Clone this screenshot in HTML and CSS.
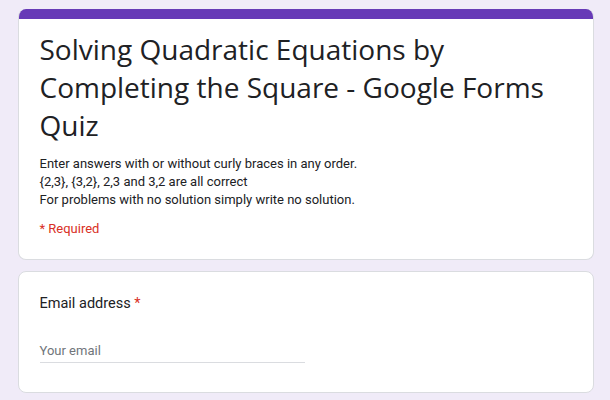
FILE: index.html
```html
<!DOCTYPE html>
<html>
<head>
<meta charset="utf-8">
<link rel="stylesheet" href="styles.css">
</head>
<body>
<div class="page">
  <div class="card header-card">
    <div class="accent"></div>
    <div class="header-body">
      <h1 class="title">Solving Quadratic Equations by Completing the Square - Google Forms Quiz</h1>
      <div class="desc">Enter answers with or without curly braces in any order.<br>{2,3}, {3,2}, 2,3 and 3,2 are all correct<br>For problems with no solution simply write no solution.</div>
      <div class="required">* Required</div>
    </div>
  </div>
  <div class="card question-card">
    <div class="q-label">Email address <span class="star">*</span></div>
    <div class="input">Your email</div>
  </div>
</div>
</body>
</html>
```
FILE: styles.css
```css
html, body {
  margin: 0;
  padding: 0;
  background: #f0ebf8;
}
body {
  font-family: Roboto, "Liberation Sans", sans-serif;
  color: #202124;
}
.page {
  width: 576px;
  margin: 0 auto;
  padding: 9px 0 0 1px;
  display: flex;
  flex-direction: column;
  gap: 11px;
}
.card {
  background: #fff;
  border: 1px solid #dadce0;
  border-radius: 8px;
}
.header-card {
  border-top: none;
  overflow: hidden;
}
.accent {
  height: 10px;
  background: #673ab7;
}
.header-body {
  padding: 11px 21px 21px;
}
.title {
  margin: 0;
  font-family: "Open Sans", sans-serif;
  font-weight: 400;
  font-size: 28px;
  line-height: 38px;
  color: #202124;
}
.desc {
  margin-top: 11px;
  font-size: 13px;
  line-height: 18px;
  color: #202124;
}
.required {
  margin-top: 11px;
  font-size: 13px;
  line-height: 18px;
  color: #d93025;
}
.question-card {
  padding: 22px 21px 29px;
}
.q-label {
  font-size: 14.5px;
  line-height: 20px;
}
.star {
  color: #d93025;
}
.input {
  margin-top: 27px;
  width: 265px;
  font-size: 13px;
  line-height: 20px;
  padding-bottom: 1px;
  color: #70757a;
  border-bottom: 1px solid #dadce0;
}
```
